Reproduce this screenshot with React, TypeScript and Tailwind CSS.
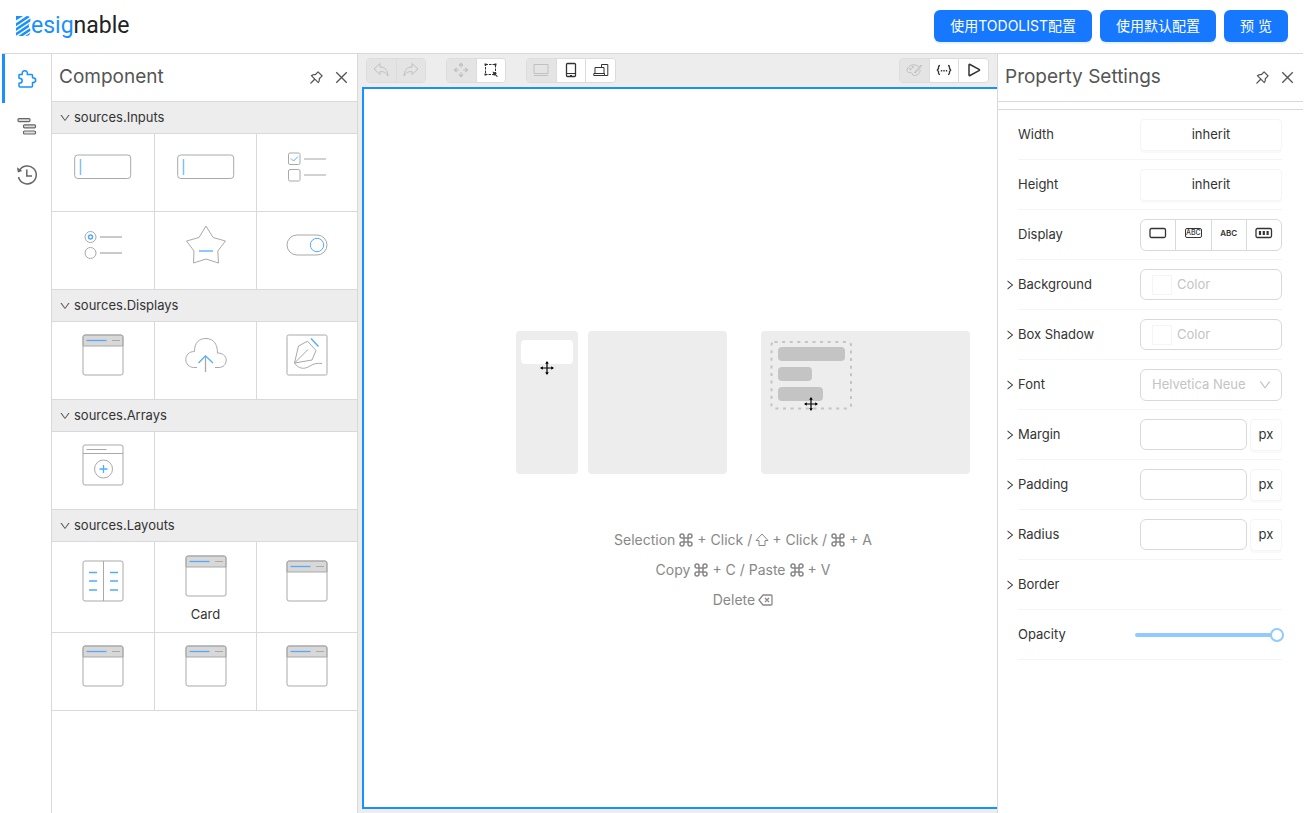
import type { ReactNode } from "react";
import {
  AiOutlineClose,
  AiOutlineDown,
  AiOutlinePushpin,
  AiOutlineRight,
} from "react-icons/ai";
import { Command } from "lucide-react";

const GRAY = "#a9a9a9";
const BLUE = "#4facff";

function LogoMark() {
  return (
    <svg width="15" height="20" viewBox="0 0 15 20" className="shrink-0" aria-hidden="true">
      <defs>
        <clipPath id="logo-shape">
          <path d="M0 0H11Q14.500 0 14.500 4Q14.500 7.500 12.500 9.500Q14.500 12 14.500 15Q14.500 20 10 20H0Z" />
        </clipPath>
      </defs>
      <g clipPath="url(#logo-shape)" stroke="#1890ff" strokeWidth="2.500">
        <path d="M-2 10L16 -2M-2 14.800L16 2.800M-2 19.600L16 7.600M-2 24.400L16 12.400M4 25L16 17" />
        <path d="M0 0H7L0 4.500Z" fill="#1890ff" stroke="none" />
      </g>
    </svg>
  );
}

function PuzzleIcon() {
  return (
    <svg width="20" height="20" viewBox="0 0 20 20" fill="none" stroke="#1890ff" strokeWidth="1.500" strokeLinejoin="round" aria-hidden="true">
      <path d="M2.500 5.500H5.200C5 3 5.900 1.700 7.800 1.700C9.700 1.700 10.600 3 10.300 5.500H14.500Q15.500 5.500 15.500 6.500V8.800C17.300 8.800 18.700 9.700 18.700 11.200C18.700 12.700 17.300 13.600 15.500 13.600V17Q15.500 18 14.500 18H3Q2 18 2 17V14.300C4 14.300 5.200 13.300 5.200 11.800C5.200 10.300 4 9.300 2 9.300V6Q2 5.500 2.500 5.500Z" />
    </svg>
  );
}

function OutlineIcon() {
  return (
    <svg width="20" height="20" viewBox="0 0 20 20" fill="#dedede" stroke="#666" strokeWidth="1.200" aria-hidden="true">
      <rect x="1" y="1.600" width="12" height="3" rx="1" />
      <rect x="6.500" y="7.800" width="12" height="3" rx="1" />
      <rect x="6.500" y="14" width="12" height="3" rx="1" />
    </svg>
  );
}

function HistoryIcon() {
  return (
    <svg width="22" height="22" viewBox="0 0 22 22" fill="none" stroke="currentColor" strokeWidth="1.500" aria-hidden="true">
      <path d="M3.400 6.500A9 9 0 1 1 2.500 13" />
      <path d="M10.800 5.500V12H16" />
      <path d="M1 3.300L1.800 8.500L6.300 7Z" fill="currentColor" stroke="none" />
    </svg>
  );
}

function InputArt() {
  return (
    <svg width="58" height="26" viewBox="0 0 58 26" fill="none" aria-hidden="true">
      <rect x="0.700" y="1" width="56" height="23.500" rx="3" stroke={GRAY} />
      <path d="M6.500 5V21" stroke="#7cc0ff" strokeWidth="1.500" />
    </svg>
  );
}

function CheckboxArt() {
  return (
    <svg width="40" height="32" viewBox="0 0 40 32" fill="none" stroke={GRAY} aria-hidden="true">
      <rect x="1.500" y="2" width="11.500" height="11.500" rx="1.500" />
      <rect x="1.500" y="18.500" width="11.500" height="11.500" rx="1.500" />
      <path d="M17 8H39M17 24H39" stroke="#c4c4c4" strokeWidth="1.500" />
      <path d="M4 7.500L6.500 10L11 5.500" stroke={BLUE} />
    </svg>
  );
}

function RadioArt() {
  return (
    <svg width="40" height="32" viewBox="0 0 40 32" fill="none" stroke={GRAY} aria-hidden="true">
      <circle cx="7.500" cy="8" r="5.500" />
      <circle cx="7.500" cy="24" r="5.500" />
      <circle cx="7.500" cy="8" r="2" stroke={BLUE} strokeWidth="1.500" />
      <path d="M17 8H39M17 24H39" stroke="#b8b8b8" strokeWidth="1.500" />
    </svg>
  );
}

function StarArt() {
  return (
    <svg width="42" height="42" viewBox="0 0 42 42" fill="none" stroke={GRAY} strokeLinejoin="round" aria-hidden="true">
      <path d="M21 2L28 13.500L40.500 17L32.800 27L33.500 39L21 35L8.500 39L9 27L1.500 17L14 13.500Z" />
      <path d="M14 27H28" stroke={BLUE} strokeWidth="1.300" />
    </svg>
  );
}

function SwitchArt() {
  return (
    <svg width="42" height="22" viewBox="0 0 42 22" fill="none" stroke={GRAY} aria-hidden="true">
      <rect x="1" y="1" width="40" height="20" rx="10" />
      <circle cx="31" cy="11" r="6.700" stroke={BLUE} />
    </svg>
  );
}

function CardArt() {
  return (
    <svg width="42" height="42" viewBox="0 0 42 42" fill="none" stroke={GRAY} aria-hidden="true">
      <path d="M1 12V3Q1 1 3 1H39Q41 1 41 3V12Z" fill="#d8d8d8" />
      <rect x="1" y="1" width="40" height="40" rx="2" />
      <path d="M4.500 6.500H24.500" stroke="#57a9f5" strokeWidth="1.300" />
      <path d="M30 6.500H38" />
    </svg>
  );
}

function UploadArt() {
  return (
    <svg width="42" height="36" viewBox="0 0 42 36" fill="none" stroke={GRAY} aria-hidden="true">
      <path d="M12 30.500H8.500C4 30 .8 27 .8 22.500C.8 18 4 14.500 9.500 14.500C9.500 5.500 14 1.500 21 1.500C28 1.500 32.500 6.500 32.500 16C37.500 16 41.200 19 41.200 23C41.200 27.500 38 30.500 34 30.500H30" />
      <path d="M20.500 19V35" strokeWidth="1.300" />
      <path d="M13.500 26L20.500 18.800L28 26" stroke={BLUE} strokeWidth="1.300" />
    </svg>
  );
}

function TextArt() {
  return (
    <svg width="42" height="42" viewBox="0 0 42 42" fill="none" stroke={GRAY} strokeLinejoin="round" aria-hidden="true">
      <rect x="1" y="1" width="40" height="40" rx="1.500" />
      <path d="M8.500 29L12.500 12L21.500 7.200L30 16.500L26 26L8.500 29L22 15.500M8.500 29C12 34.500 18 36 24 32C28 29.500 31 29 36 29.500" />
      <path d="M25 4.500L32.500 12.500" stroke={BLUE} strokeWidth="1.300" />
    </svg>
  );
}

function ArrayCardsArt() {
  return (
    <svg width="42" height="42" viewBox="0 0 42 42" fill="none" stroke={GRAY} aria-hidden="true">
      <rect x="1" y="1" width="40" height="40" rx="2" />
      <path d="M1 9.500H41M4.500 5.500H24.500" />
      <circle cx="21.500" cy="25" r="9" />
      <path d="M21.500 21V29M17.500 25H25.500" stroke={BLUE} strokeWidth="1.300" />
    </svg>
  );
}

function GridArt() {
  return (
    <svg width="42" height="42" viewBox="0 0 42 42" fill="none" stroke={GRAY} aria-hidden="true">
      <rect x="1" y="1" width="40" height="40" rx="2" />
      <path d="M21.500 1V41" />
      <path d="M7 12.500H15M7 21H15M7 30H15M28 12.500H36M28 21H36M28 30H36" stroke={BLUE} strokeWidth="1.300" />
    </svg>
  );
}

type Item = { id: string; art: ReactNode; title?: string };
type Section = { title: string; items: Item[] };

const sections: Section[] = [
  {
    title: "sources.Inputs",
    items: [
      { id: "input", art: <InputArt /> },
      { id: "password", art: <InputArt /> },
      { id: "checkbox", art: <CheckboxArt /> },
      { id: "radio", art: <RadioArt /> },
      { id: "rate", art: <StarArt /> },
      { id: "switch", art: <SwitchArt /> },
    ],
  },
  {
    title: "sources.Displays",
    items: [
      { id: "panel", art: <CardArt /> },
      { id: "upload", art: <UploadArt /> },
      { id: "text", art: <TextArt /> },
    ],
  },
  { title: "sources.Arrays", items: [{ id: "array-cards", art: <ArrayCardsArt /> }] },
  {
    title: "sources.Layouts",
    items: [
      { id: "grid", art: <GridArt /> },
      { id: "card", art: <CardArt />, title: "Card" },
      { id: "tab", art: <CardArt /> },
      { id: "collapse", art: <CardArt /> },
      { id: "space", art: <CardArt /> },
      { id: "form", art: <CardArt /> },
    ],
  },
];

function PanelHeader({ title }: { title: string }) {
  return (
    <div className="flex h-12 shrink-0 items-center border-b border-[#d9d9d9] pr-[7px] pl-[7px] text-[#555]">
      <h2 className="flex-1 text-[19px] font-normal">{title}</h2>
      <div className="flex items-center gap-[7px]">
        <button type="button" aria-label="Pin panel" className="flex size-[18px] items-center justify-center">
          <AiOutlinePushpin size={17} />
        </button>
        <button type="button" aria-label="Close panel" className="flex size-[18px] items-center justify-center">
          <AiOutlineClose size={17} />
        </button>
      </div>
    </div>
  );
}

function ResourceSection({ title, items }: Section) {
  const fillers = (3 - (items.length % 3)) % 3;
  return (
    <section>
      <h3 className="border-b border-[#d9d9d9] bg-[#ededed] text-[13px] text-[#333]">
        <button type="button" className="flex h-[31px] w-full items-center gap-[3px] pl-[7px]">
          <AiOutlineDown size={12} className="text-[#555]" />
          {title}
        </button>
      </h3>
      <div className="grid grid-cols-[34fr_34fr_33fr]">
        {items.map((item, i) => (
          <button
            key={item.id}
            type="button"
            aria-label={item.title ?? item.id}
            className={
              "flex min-h-[78px] flex-col items-center justify-center gap-[7px] border-b border-[#d9d9d9] px-2 text-[13px] text-[#333] " +
              (i % 3 === 2 ? "" : "border-r ") +
              (item.title ? "h-[91px] pt-1" : "pb-3")
            }
          >
            <span className={item.title ? "" : "flex h-[42px] items-center"}>{item.art}</span>
            {item.title && <span className="leading-5">{item.title}</span>}
          </button>
        ))}
        {fillers > 0 && <div className="col-span-2 border-b border-[#d9d9d9]" />}
      </div>
    </section>
  );
}

function ToolButton({ label, disabled, children }: { label: string; disabled?: boolean; children: ReactNode }) {
  return (
    <button
      type="button"
      aria-label={label}
      disabled={disabled}
      className={
        "flex h-full flex-1 items-center justify-center border-r border-[#dcdcdc] last:border-r-0 " +
        (disabled ? "bg-[#e4e4e4] text-[#c0c0c0]" : "bg-white text-[#333]")
      }
    >
      <svg width="16" height="16" viewBox="0 0 16 16" fill="none" stroke="currentColor" strokeLinejoin="round" aria-hidden="true">
        {children}
      </svg>
    </button>
  );
}

const GROUP = "flex h-[25px] overflow-hidden rounded border border-[#dcdcdc]";

function Toolbar() {
  return (
    <div className="flex h-[33px] items-center gap-5 px-2 pb-px">
      <div className={GROUP + " w-[60px]"}>
        <ToolButton label="Undo" disabled>
          <path d="M1 7L7 1.500V5C12 5 14.500 8 15 14C13 10.500 11 9.500 7 9.500V12.500Z" />
        </ToolButton>
        <ToolButton label="Redo" disabled>
          <path d="M15 7L9 1.500V5C4 5 1.500 8 1 14C3 10.500 5 9.500 9 9.500V12.500Z" />
        </ToolButton>
      </div>
      <div className={GROUP + " w-[60px]"}>
        <ToolButton label="Move" disabled>
          <path d="M6 3.800L8 1.500L10 3.800M6 12.200L8 14.500L10 12.200M3.800 6L1.500 8L3.800 10M12.200 6L14.500 8L12.200 10" strokeWidth="1.400" />
          <path d="M8 2V6M8 10V14M2 8H6M10 8H14" />
        </ToolButton>
        <ToolButton label="Selection">
          <path d="M2.500 2.500H12.500V12.500H2.500Z" strokeDasharray="2.500 1" />
          <path d="M1.500 1.500H3.500V3.500H1.500ZM11.500 1.500H13.500V3.500H11.500ZM1.500 11.500H3.500V13.500H1.500Z" fill="currentColor" stroke="none" />
          <path d="M9.500 9.500L14 11L12.700 12.200L14.800 14.300L14 15L12 13L11 14Z" fill="currentColor" stroke="none" />
        </ToolButton>
      </div>
      <div className={GROUP + " w-[90px]"}>
        <ToolButton label="PC" disabled>
          <rect x="1" y="2.500" width="14" height="9" />
          <path d="M1 13.500H15" />
        </ToolButton>
        <ToolButton label="Mobile">
          <rect x="3.500" y="1.500" width="9" height="13" rx="1" strokeWidth="1.300" />
          <path d="M3.500 11.500H12.500M7 13.500H9" />
        </ToolButton>
        <ToolButton label="Responsive">
          <path d="M2 11.500V5.500H11V11.500M.8 11.500H11.500V13.500H.8ZM8.500 5V2.500H14.800V13.500H11.500" />
        </ToolButton>
      </div>
      <div className={GROUP + " ml-auto w-[90px]"}>
        <ToolButton label="Design" disabled>
          <path d="M13 5.500C11.500 2 4.500 1.500 1.800 6C0 9.500 2 11 4.500 10.500C6.500 10.300 5.500 13.500 8.500 13.500C12 13.500 14.500 10.500 14 7.500" />
          <path d="M15 3L9.500 9L8.500 10.800L10.500 10L15.500 4Z" />
          <circle cx="4.500" cy="7" r="0.800" />
          <circle cx="7" cy="5" r="0.800" />
        </ToolButton>
        <ToolButton label="JSON">
          <path d="M4 3.500Q2.500 3.500 2.500 5V6.500L1.300 8L2.500 9.500V11Q2.500 12.500 4 12.500M12 3.500Q13.500 3.500 13.500 5V6.500L14.700 8L13.500 9.500V11Q13.500 12.500 12 12.500" strokeWidth="1.300" />
          <path d="M4.800 8.700H6.200M7.300 8.700H8.700M9.800 8.700H11.200" strokeWidth="1.400" />
        </ToolButton>
        <ToolButton label="Preview">
          <path d="M3 3Q3 2 4 2.500L13 7.300Q14 8 13 8.700L4 13.500Q3 14 3 13Z" strokeWidth="1.500" />
        </ToolButton>
      </div>
    </div>
  );
}

function MoveCursor() {
  return (
    <svg width="14" height="14" viewBox="0 0 14 14" aria-hidden="true">
      <path d="M7 1V13M1 7H13" stroke="#000" strokeWidth="1.200" />
      <path d="M7 0L8.800 2.800H5.200ZM7 14L8.800 11.200H5.200ZM0 7L2.800 5.200V8.800ZM14 7L11.200 5.200V8.800Z" />
    </svg>
  );
}

function ShiftKey() {
  return (
    <svg width="14" height="14" viewBox="0 0 14 14" fill="none" stroke="currentColor" strokeLinejoin="round" aria-label="Shift">
      <path d="M7 1L13 7.500H10V12.500H4V7.500H1Z" />
    </svg>
  );
}

function DeleteKey() {
  return (
    <svg width="15" height="14" viewBox="0 0 15 14" fill="none" stroke="currentColor" strokeWidth="1.300" strokeLinejoin="round" aria-label="Backspace">
      <path d="M1 7L5 2H13Q14 2 14 3V11Q14 12 13 12H5ZM7 5L11 9M11 5L7 9" />
    </svg>
  );
}

function Cmd() {
  return <Command size={16} strokeWidth={2.25} aria-label="Command" />;
}

function EmptyCanvas() {
  return (
    <div className="flex min-h-0 flex-1 flex-col items-center justify-center border-2 border-r-0 border-[#1890ff] bg-white pt-[49px] pl-[125px] text-[#888]">
      <div className="flex h-[143px]">
        <div className="relative w-[62px] rounded-sm bg-[#ededed] px-[5px] pt-[9px]">
          <div className="h-6 rounded-sm bg-white" />
          <span className="absolute top-[30px] left-6">
            <MoveCursor />
          </span>
        </div>
        <div className="ml-[10px] w-[139px] rounded-sm bg-[#ededed]" />
        <div className="ml-[34px] w-[209px] rounded-sm bg-[#ededed] pt-[9px] pl-[9px]">
          <div className="relative h-[70px] w-[82px]">
            <svg className="absolute inset-0" width="82" height="70" viewBox="0 0 82 70" fill="none" aria-hidden="true">
              <rect x="1.500" y="2" width="79.500" height="66.500" rx="3" stroke="#c4c4c4" strokeWidth="2" strokeDasharray="3 4.600" />
            </svg>
            <div className="flex flex-col gap-[6px] pt-[7px] pl-[8px]">
              <div className="h-[14px] w-[67px] rounded-sm bg-[#c4c4c4]" />
              <div className="h-[14px] w-[34px] rounded-sm bg-[#c4c4c4]" />
              <div className="h-[14px] w-[45px] rounded-sm bg-[#c4c4c4]" />
            </div>
            <span className="absolute top-[57px] left-[34px]">
              <MoveCursor />
            </span>
          </div>
        </div>
      </div>
      <div className="mt-[51px] flex flex-col items-center text-sm leading-[30px]">
        <p className="flex items-center gap-[3px]">
          Selection <Cmd /> + Click / <ShiftKey /> + Click / <Cmd /> + A
        </p>
        <p className="flex items-center gap-[3px]">
          Copy <Cmd /> + C / Paste <Cmd /> + V
        </p>
        <p className="flex items-center gap-[3px]">
          Delete <DeleteKey />
        </p>
      </div>
    </div>
  );
}

function SettingRow({ label, htmlFor, expandable, children }: { label: string; htmlFor?: string; expandable?: boolean; children?: ReactNode }) {
  return (
    <div className="flex h-[50px] pr-[21px] pl-[6px]">
      <div className="flex w-[14px] items-center">
        {expandable && (
          <button type="button" aria-label={"Expand " + label}>
            <AiOutlineRight size={12} />
          </button>
        )}
      </div>
      <div className="flex flex-1 items-center border-b border-[#f5f5f5]">
        <label htmlFor={htmlFor} className="flex-1">
          {label}
        </label>
        <div className="flex w-[142px] items-center gap-[3px]">{children}</div>
      </div>
    </div>
  );
}

const BOX_BUTTON = "h-8 rounded-sm border border-[#f5f5f5] bg-white shadow-[0_2px_0_#fafafa]";

function ColorField({ id }: { id: string }) {
  return (
    <div className="flex h-[31px] w-full items-center gap-[5px] rounded-md border border-[#d9d9d9] pl-[11px]">
      <span className="size-5 border border-[#f5f5f5]" />
      <input id={id} placeholder="Color" className="w-0 flex-1 bg-transparent outline-none placeholder:text-[#c4c4c4]" />
    </div>
  );
}

function SizeField({ id }: { id: string }) {
  return (
    <>
      <input id={id} className="h-[31px] w-0 flex-1 rounded-md border border-[#d9d9d9] px-2 outline-none" />
      <button type="button" className={BOX_BUTTON + " w-8"}>
        px
      </button>
    </>
  );
}

function DisplayField() {
  const cell = "flex flex-1 items-center justify-center border-r border-[#d9d9d9] pb-1 last:border-r-0";
  return (
    <div className="flex h-8 w-full rounded-md border border-[#d9d9d9] text-[#333]">
      <button type="button" aria-label="block" className={cell}>
        <svg width="18" height="12" viewBox="0 0 18 12" fill="none" stroke="currentColor" strokeWidth="1.300" aria-hidden="true">
          <rect x="1" y="1.500" width="15.500" height="9" rx="1.500" />
        </svg>
      </button>
      <button type="button" aria-label="inline-block" className={cell}>
        <span className="rounded-[2px] border border-[#333] px-0 text-[7px] leading-[8px] font-medium">ABC</span>
      </button>
      <button type="button" className={cell + " text-[8px] font-semibold"}>
        ABC
      </button>
      <button type="button" aria-label="flex" className={cell}>
        <svg width="18" height="12" viewBox="0 0 18 12" fill="none" stroke="currentColor" strokeWidth="1.300" aria-hidden="true">
          <rect x="1" y="1.500" width="15.500" height="9" rx="1.500" />
          <path d="M5 4V8M8.800 4V8M12.600 4V8" strokeWidth="2.200" />
        </svg>
      </button>
    </div>
  );
}

export default function App() {
  const primary = "h-8 rounded-md bg-[#1677ff] px-4 text-sm whitespace-nowrap text-white shadow-[0_2px_0_rgba(5,145,255,0.1)]";
  return (
    <div className="flex h-screen flex-col overflow-hidden bg-white px-0.5 font-[Inter,'Noto_Sans_CJK_SC',sans-serif] text-[13px] text-[#333]">
      <header className="flex h-[54px] shrink-0 items-center border-b border-[#d9d9d9] pr-[15px] pb-px pl-[14px]">
        <a href="#" aria-label="Designable" className="flex items-center font-[Roboto,sans-serif] text-[23px] leading-6 text-[#222]">
          <LogoMark />
          <span className="text-[#1890ff]">esig</span>
          <span>nable</span>
        </a>
        <div className="ml-auto flex gap-2">
          <button type="button" className={primary}>使用TODOLIST配置</button>
          <button type="button" className={primary}>使用默认配置</button>
          <button type="button" className={primary}>预 览</button>
        </div>
      </header>
      <div className="flex min-h-0 flex-1">
        <nav className="flex w-[50px] shrink-0 flex-col border-r border-[#d9d9d9] text-[#666]">
          <button type="button" aria-label="Component" className="flex h-[49px] items-center justify-center border-l-[3px] border-[#1890ff] pr-[3px]">
            <PuzzleIcon />
          </button>
          <button type="button" aria-label="Outlined tree" className="flex h-12 items-center justify-center">
            <OutlineIcon />
          </button>
          <button type="button" aria-label="History" className="flex h-12 items-center justify-center">
            <HistoryIcon />
          </button>
        </nav>
        <aside className="flex w-[306px] shrink-0 flex-col border-r border-[#d9d9d9]">
          <PanelHeader title="Component" />
          {sections.map((s) => (
            <ResourceSection key={s.title} {...s} />
          ))}
        </aside>
        <main className="flex min-w-0 flex-1 flex-col bg-[#ededed]">
          <Toolbar />
          <div className="flex min-h-0 flex-1 pb-1 pl-1">
            <EmptyCanvas />
          </div>
        </main>
        <aside className="flex w-[306px] shrink-0 flex-col border-l border-[#d9d9d9]">
          <PanelHeader title="Property Settings" />
          <div className="h-2 shrink-0 border-b border-[#d9d9d9]" />
          <SettingRow label="Width">
            <button type="button" className={BOX_BUTTON + " w-full"}>inherit</button>
          </SettingRow>
          <SettingRow label="Height">
            <button type="button" className={BOX_BUTTON + " w-full"}>inherit</button>
          </SettingRow>
          <SettingRow label="Display">
            <DisplayField />
          </SettingRow>
          <SettingRow label="Background" htmlFor="background" expandable>
            <ColorField id="background" />
          </SettingRow>
          <SettingRow label="Box Shadow" htmlFor="shadow" expandable>
            <ColorField id="shadow" />
          </SettingRow>
          <SettingRow label="Font" htmlFor="font" expandable>
            <div className="relative w-full">
              <select id="font" className="h-8 w-full appearance-none rounded-md border border-[#d9d9d9] bg-white pl-[11px] text-[#c4c4c4] outline-none">
                <option>Helvetica Neue</option>
              </select>
              <AiOutlineDown size={14} className="pointer-events-none absolute top-[9px] right-[10px] text-[#bfbfbf]" />
            </div>
          </SettingRow>
          <SettingRow label="Margin" htmlFor="margin" expandable>
            <SizeField id="margin" />
          </SettingRow>
          <SettingRow label="Padding" htmlFor="padding" expandable>
            <SizeField id="padding" />
          </SettingRow>
          <SettingRow label="Radius" htmlFor="radius" expandable>
            <SizeField id="radius" />
          </SettingRow>
          <SettingRow label="Border" expandable />
          <SettingRow label="Opacity" htmlFor="opacity">
            <input
              id="opacity"
              type="range"
              min={0}
              max={1}
              step={0.01}
              defaultValue={1}
              className="-mr-[2px] -ml-[5px] h-1 flex-1 appearance-none rounded-full bg-[#91caff] [&::-webkit-slider-thumb]:size-[14px] [&::-webkit-slider-thumb]:appearance-none [&::-webkit-slider-thumb]:rounded-full [&::-webkit-slider-thumb]:border-2 [&::-webkit-slider-thumb]:border-[#91caff] [&::-webkit-slider-thumb]:bg-white"
            />
          </SettingRow>
        </aside>
      </div>
    </div>
  );
}
